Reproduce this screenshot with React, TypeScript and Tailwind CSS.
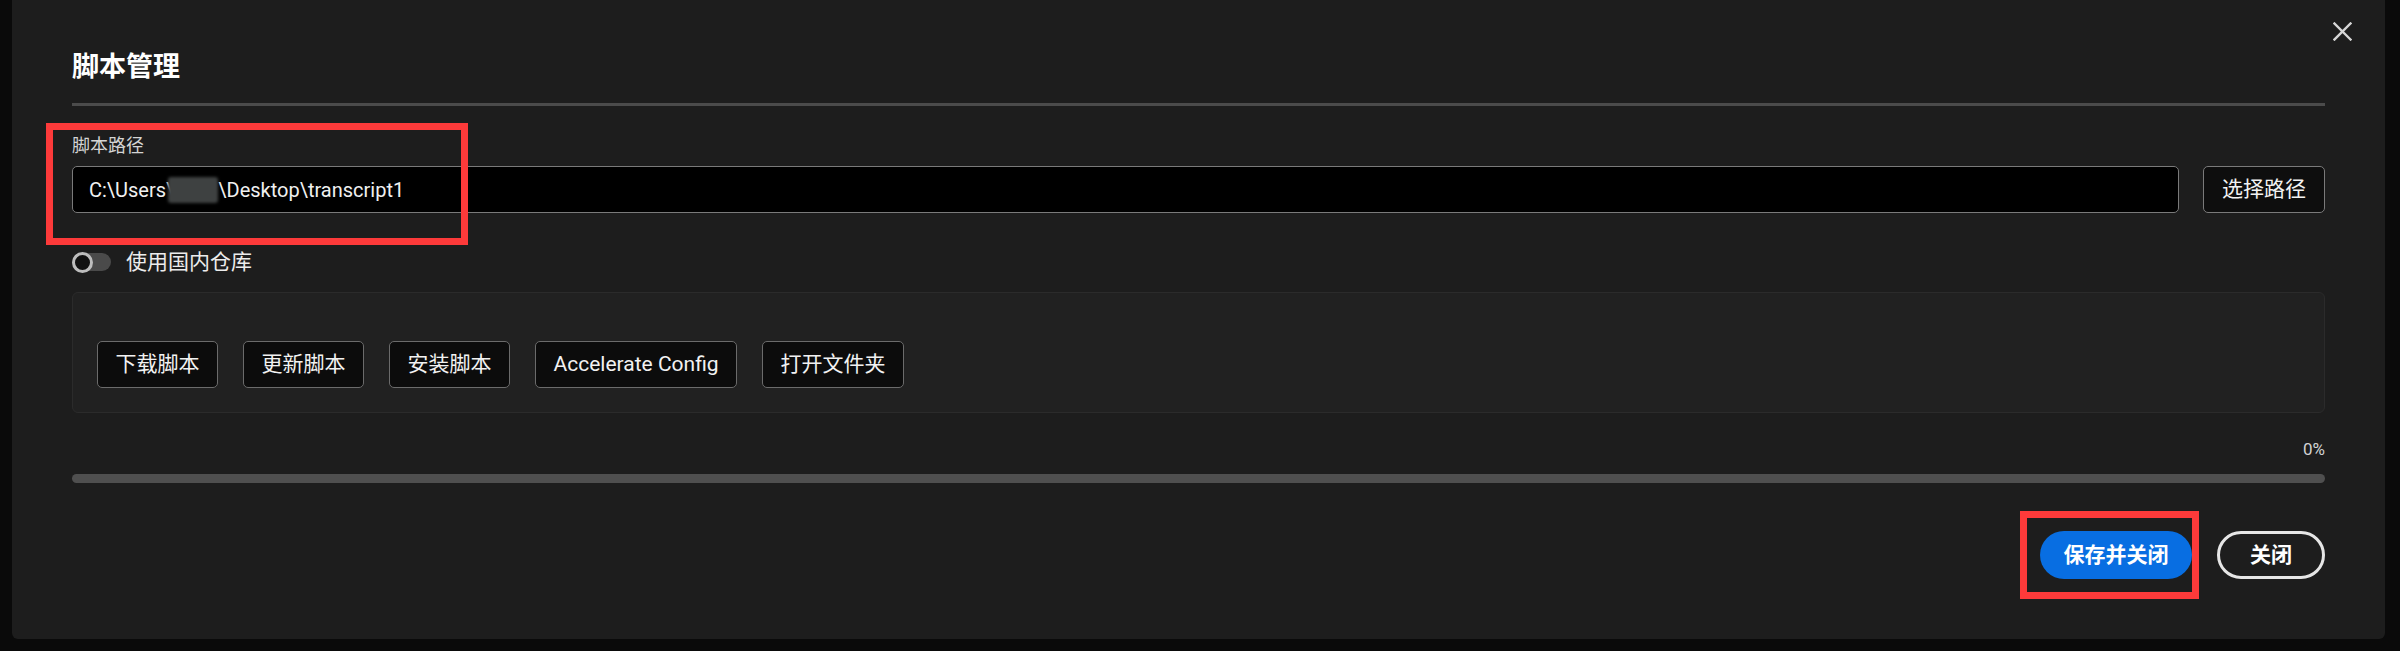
import React from "react";

const font = "font-['Roboto','Noto_Sans_CJK_SC',sans-serif]";

function ActionButton({ children }: { children: React.ReactNode }) {
  return (
    <button className="h-[47px] px-[17.5px] rounded-[5px] border border-[#6b6b6b] bg-[#0c0c0c] text-[21px] leading-none text-[#f2f2f2] whitespace-nowrap">
      {children}
    </button>
  );
}

export default function App() {
  return (
    <div className={`relative w-[2400px] h-[651px] bg-[#0a0a0a] ${font} overflow-hidden`}>
      <div className="relative ml-[12px] w-[2373px] h-[639px] bg-[#1d1d1d] rounded-b-[6px] px-[60px] flex flex-col">
        {/* close */}
        <button className="absolute right-[33px] top-[22px] w-[19px] h-[19px] text-[#d6d6d6]">
          <svg viewBox="0 0 19 19" width="19" height="19" fill="none" stroke="currentColor" strokeWidth="2.4" strokeLinecap="square">
            <path d="M1.5 1.5 L17.5 17.5 M17.5 1.5 L1.5 17.5" />
          </svg>
        </button>

        <h1 className="mt-[49px] text-[27px] leading-[36px] font-bold text-white">脚本管理</h1>
        <div className="mt-[18px] h-[3px] bg-[#4b4b4b]" />

        <div className="mt-[28px] text-[18px] leading-[24px] text-[#d4d4d4]">脚本路径</div>
        <div className="mt-[8px] flex items-center gap-[24px]">
          <div className="flex-1 h-[47px] rounded-[5px] border border-[#7a7a7a] bg-black px-[16px] flex items-center text-[20px] text-[#f0f0f0] whitespace-nowrap">
            <span>C:\Users\</span>
            <span className="inline-block w-[50px] h-[26px] ml-[-6px] bg-[#3e4141] blur-[1.5px] rounded-[3px]" />
            <span>\Desktop\transcript1</span>
          </div>
          <button className="h-[47px] w-[122px] rounded-[5px] border border-[#7a7a7a] bg-[#0e0e0e] text-[21px] leading-none text-[#f2f2f2]">
            选择路径
          </button>
        </div>

        <div className="mt-[39px] h-[20px] flex items-center gap-[15px]">
          <div className="relative w-[39px] h-[18px] rounded-full bg-[#4a4a4a]">
            <div className="absolute left-0 top-[-1.5px] w-[21px] h-[21px] rounded-full border-[3px] border-[#bdbdbd] bg-[#111]" />
          </div>
          <span className="text-[21px] leading-none text-[#ececec]">使用国内仓库</span>
        </div>

        <div className="mt-[20px] h-[121px] rounded-[6px] border border-[#2b2b2b] bg-[#212121] pt-[48px] px-[24px] flex gap-[25px] items-start">
          <ActionButton>下载脚本</ActionButton>
          <ActionButton>更新脚本</ActionButton>
          <ActionButton>安装脚本</ActionButton>
          <ActionButton>Accelerate Config</ActionButton>
          <ActionButton>打开文件夹</ActionButton>
        </div>

        <div className="mt-[24px] text-right text-[17px] leading-[24px] text-[#d2d2d2]">0%</div>
        <div className="mt-[13px] h-[9px] rounded-full bg-[#4f4f4f]" />

        <div className="mt-[48px] flex justify-end gap-[25px]">
          <button className="h-[48px] w-[152px] rounded-full bg-[#086ee2] text-[21px] leading-none font-bold text-white">
            保存并关闭
          </button>
          <button className="h-[48px] w-[108px] rounded-full border-[3px] border-[#e6e6e6] text-[21px] leading-none font-bold text-white">
            关闭
          </button>
        </div>
      </div>

      {/* annotation boxes */}
      <div className="absolute left-[46px] top-[123px] w-[422px] h-[122px] border-[7px] border-[#fd3a3a] pointer-events-none" />
      <div className="absolute left-[2020px] top-[511px] w-[179px] h-[88px] border-[7px] border-[#fd3a3a] pointer-events-none" />
    </div>
  );
}
